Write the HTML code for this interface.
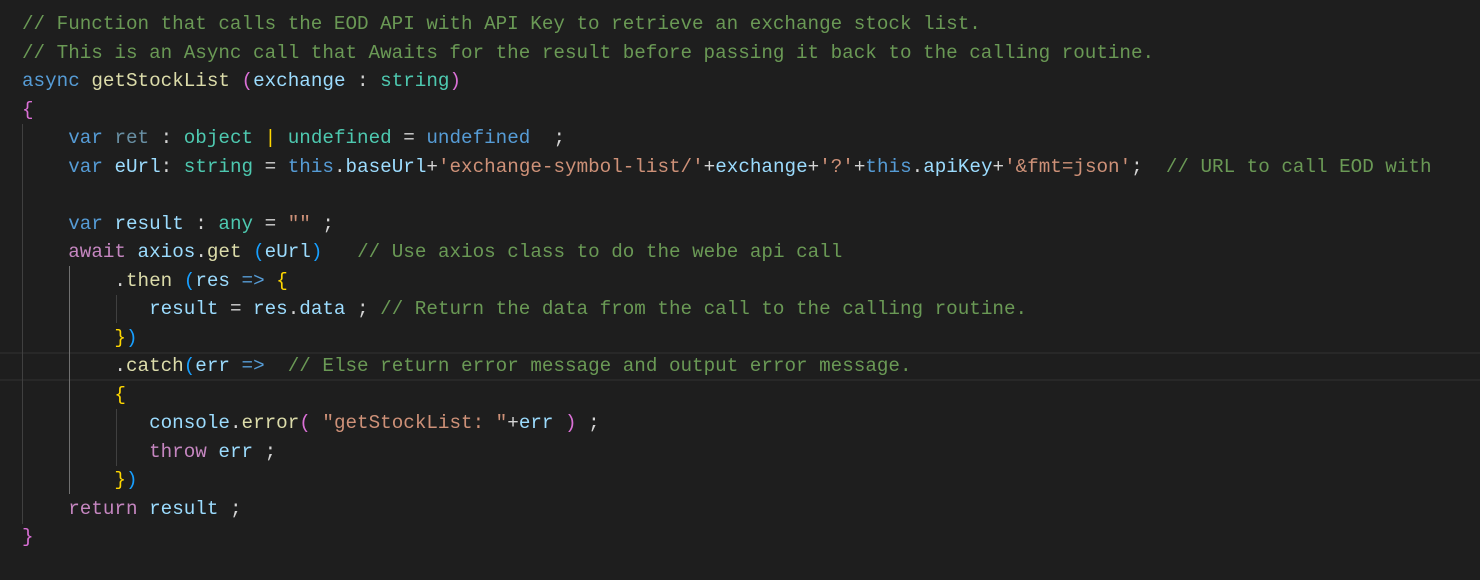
<!DOCTYPE html>
<html><head><meta charset="utf-8"><style>
html,body{margin:0;padding:0;background:#1e1e1e;width:1480px;height:580px;overflow:hidden}
.ed{position:relative;width:1480px;height:580px;font-family:"Liberation Mono",monospace;font-size:19.25px;color:#d4d4d4}
.l{position:absolute;left:22px;height:28.5px;line-height:28.5px;white-space:pre}
.hl{position:absolute;left:0;width:1480px;top:352px;height:25px;border-top:2px solid #282828;border-bottom:2px solid #282828}
.g{position:absolute;width:1px;background:#404040}
.c{color:#6a9955}.k{color:#569cd6}.f{color:#dcdcaa}.v{color:#9cdcfe}.t{color:#4ec9b0}.s{color:#ce9178}.p{color:#c586c0}
.y{color:#ffd700}.m{color:#da70d6}.b{color:#179fff}.d{color:#9cdcfe;opacity:.6}
</style></head><body><div class="ed">
<div class="hl"></div>
<div class="g" style="left:22px;top:124px;height:400px"></div>
<div class="g" style="left:69px;top:266px;height:228px;background:#707070"></div>
<div class="g" style="left:116px;top:295px;height:28px"></div>
<div class="g" style="left:116px;top:409px;height:57px"></div>
<div class="l" style="top:10px"><span class="c">// Function that calls the EOD API with API Key to retrieve an exchange stock list.</span></div>
<div class="l" style="top:38.5px"><span class="c">// This is an Async call that Awaits for the result before passing it back to the calling routine.</span></div>
<div class="l" style="top:67px"><span class="k">async</span> <span class="f">getStockList</span> <span class="m">(</span><span class="v">exchange</span> : <span class="t">string</span><span class="m">)</span></div>
<div class="l" style="top:95.5px"><span class="m">{</span></div>
<div class="l" style="top:124px">    <span class="k">var</span> <span class="d">ret</span> : <span class="t">object</span> <span class="y">|</span> <span class="t">undefined</span> = <span class="k">undefined</span>  ;</div>
<div class="l" style="top:152.5px">    <span class="k">var</span> <span class="v">eUrl</span>: <span class="t">string</span> = <span class="k">this</span>.<span class="v">baseUrl</span>+<span class="s">'exchange-symbol-list/'</span>+<span class="v">exchange</span>+<span class="s">'?'</span>+<span class="k">this</span>.<span class="v">apiKey</span>+<span class="s">'&amp;fmt=json'</span>;  <span class="c">// URL to call EOD with</span></div>
<div class="l" style="top:209.5px">    <span class="k">var</span> <span class="v">result</span> : <span class="t">any</span> = <span class="s">""</span> ;</div>
<div class="l" style="top:238px">    <span class="p">await</span> <span class="v">axios</span>.<span class="f">get</span> <span class="b">(</span><span class="v">eUrl</span><span class="b">)</span>   <span class="c">// Use axios class to do the webe api call</span></div>
<div class="l" style="top:266.5px">        .<span class="f">then</span> <span class="b">(</span><span class="v">res</span> <span class="k">=&gt;</span> <span class="y">{</span></div>
<div class="l" style="top:295px">           <span class="v">result</span> = <span class="v">res</span>.<span class="v">data</span> ; <span class="c">// Return the data from the call to the calling routine.</span></div>
<div class="l" style="top:323.5px">        <span class="y">}</span><span class="b">)</span></div>
<div class="l" style="top:352px">        .<span class="f">catch</span><span class="b">(</span><span class="v">err</span> <span class="k">=&gt;</span>  <span class="c">// Else return error message and output error message.</span></div>
<div class="l" style="top:380.5px">        <span class="y">{</span></div>
<div class="l" style="top:409px">           <span class="v">console</span>.<span class="f">error</span><span class="m">(</span> <span class="s">"getStockList: "</span>+<span class="v">err</span> <span class="m">)</span> ;</div>
<div class="l" style="top:437.5px">           <span class="p">throw</span> <span class="v">err</span> ;</div>
<div class="l" style="top:466px">        <span class="y">}</span><span class="b">)</span></div>
<div class="l" style="top:494.5px">    <span class="p">return</span> <span class="v">result</span> ;</div>
<div class="l" style="top:523px"><span class="m">}</span></div>
</div></body></html>
